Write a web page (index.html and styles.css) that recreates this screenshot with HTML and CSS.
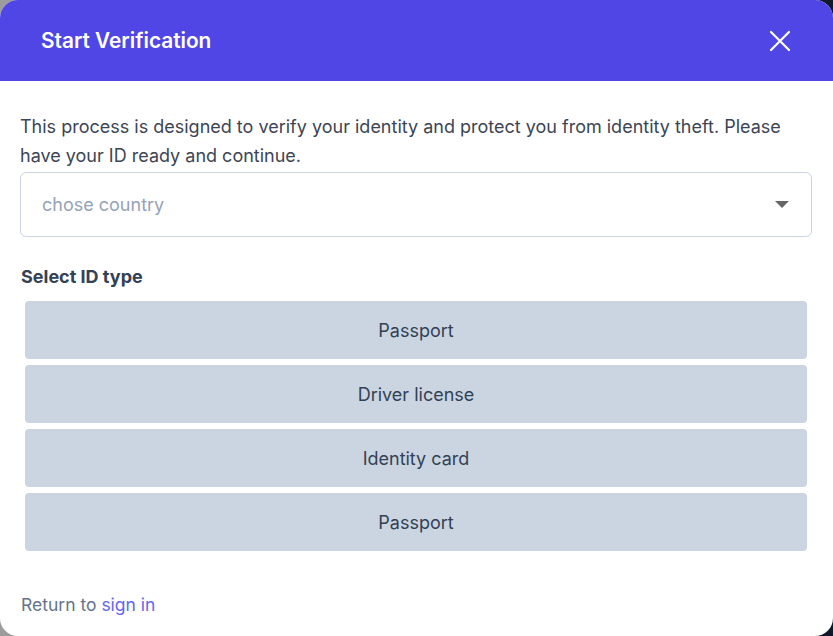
FILE: index.html
```html
<!DOCTYPE html>
<html lang="en">
<head>
<meta charset="utf-8">
<title>Start Verification</title>
<link rel="stylesheet" href="styles.css">
</head>
<body>
<div class="modal">
  <header class="modal-header">
    <h1 class="modal-title">Start Verification</h1>
    <button class="close-btn" aria-label="Close">
      <svg width="22" height="22" viewBox="0 0 22 22"><path d="M2 2L20 20M20 2L2 20" stroke="#fff" stroke-width="2.2" stroke-linecap="round"/></svg>
    </button>
  </header>
  <div class="modal-body">
    <p class="intro">This process is designed to verify your identity and protect you from identity theft. Please have your ID ready and continue.</p>
    <div class="select">
      <span class="placeholder">chose country</span>
      <span class="caret"></span>
    </div>
    <h2 class="section-label">Select ID type</h2>
    <div class="id-list">
      <button class="id-btn">Passport</button>
      <button class="id-btn">Driver license</button>
      <button class="id-btn">Identity card</button>
      <button class="id-btn">Passport</button>
    </div>
    <p class="footer">Return to <a href="#" class="link">sign in</a></p>
  </div>
</div>
</body>
</html>
```

FILE: styles.css
```css
* { box-sizing: border-box; }
html, body { height: 100%; }
body {
  margin: 0;
  background: linear-gradient(to right, #9c9c9c 50%, #111827 50%);
  font-family: Inter, "Noto Sans", sans-serif;
}
.modal {
  width: 833px;
  height: 636px;
  background: #fff;
  border-radius: 18px;
  overflow: hidden;
  display: flex;
  flex-direction: column;
}
.modal-header {
  height: 81px;
  flex: none;
  background: #4f46e5;
  display: flex;
  align-items: center;
  justify-content: space-between;
  padding: 0 42px 0 41px;
}
.modal-title {
  margin: 0;
  color: #fff;
  font-size: 20.8px;
  font-weight: 600;
  letter-spacing: 0;
}
.close-btn {
  background: none;
  border: 0;
  padding: 0;
  width: 22px;
  height: 22px;
  display: flex;
  cursor: pointer;
}
.modal-body {
  flex: 1;
  display: flex;
  flex-direction: column;
  padding: 31px 21px 0 20px;
}
.intro {
  margin: 0;
  font-size: 18px;
  line-height: 29px;
  color: #3c4555;
}
.select {
  margin-top: 2px;
  height: 65px;
  border: 1px solid #cbd5e1;
  border-radius: 6px;
  display: flex;
  align-items: center;
  justify-content: space-between;
  padding: 0 22px 0 21px;
}
.placeholder {
  font-size: 18px;
  color: #94a3b8;
}
.caret {
  width: 0;
  height: 0;
  border-left: 7px solid transparent;
  border-right: 7px solid transparent;
  border-top: 7px solid #666;
}
.section-label {
  margin: 28px 0 0 1px;
  font-size: 18px;
  font-weight: 700;
  color: #334155;
  line-height: 24px;
}
.id-list {
  margin: 12px 5px 0 5px;
  display: flex;
  flex-direction: column;
  gap: 6px;
}
.id-btn {
  height: 58px;
  border: 0;
  border-radius: 4px;
  background: #cbd5e1;
  color: #334155;
  font-family: inherit;
  font-size: 18px;
}
.footer {
  margin: 43px 0 0 1px;
  font-size: 17.5px;
  color: #64748b;
}
.link {
  color: #6366f1;
  text-decoration: none;
}
```
